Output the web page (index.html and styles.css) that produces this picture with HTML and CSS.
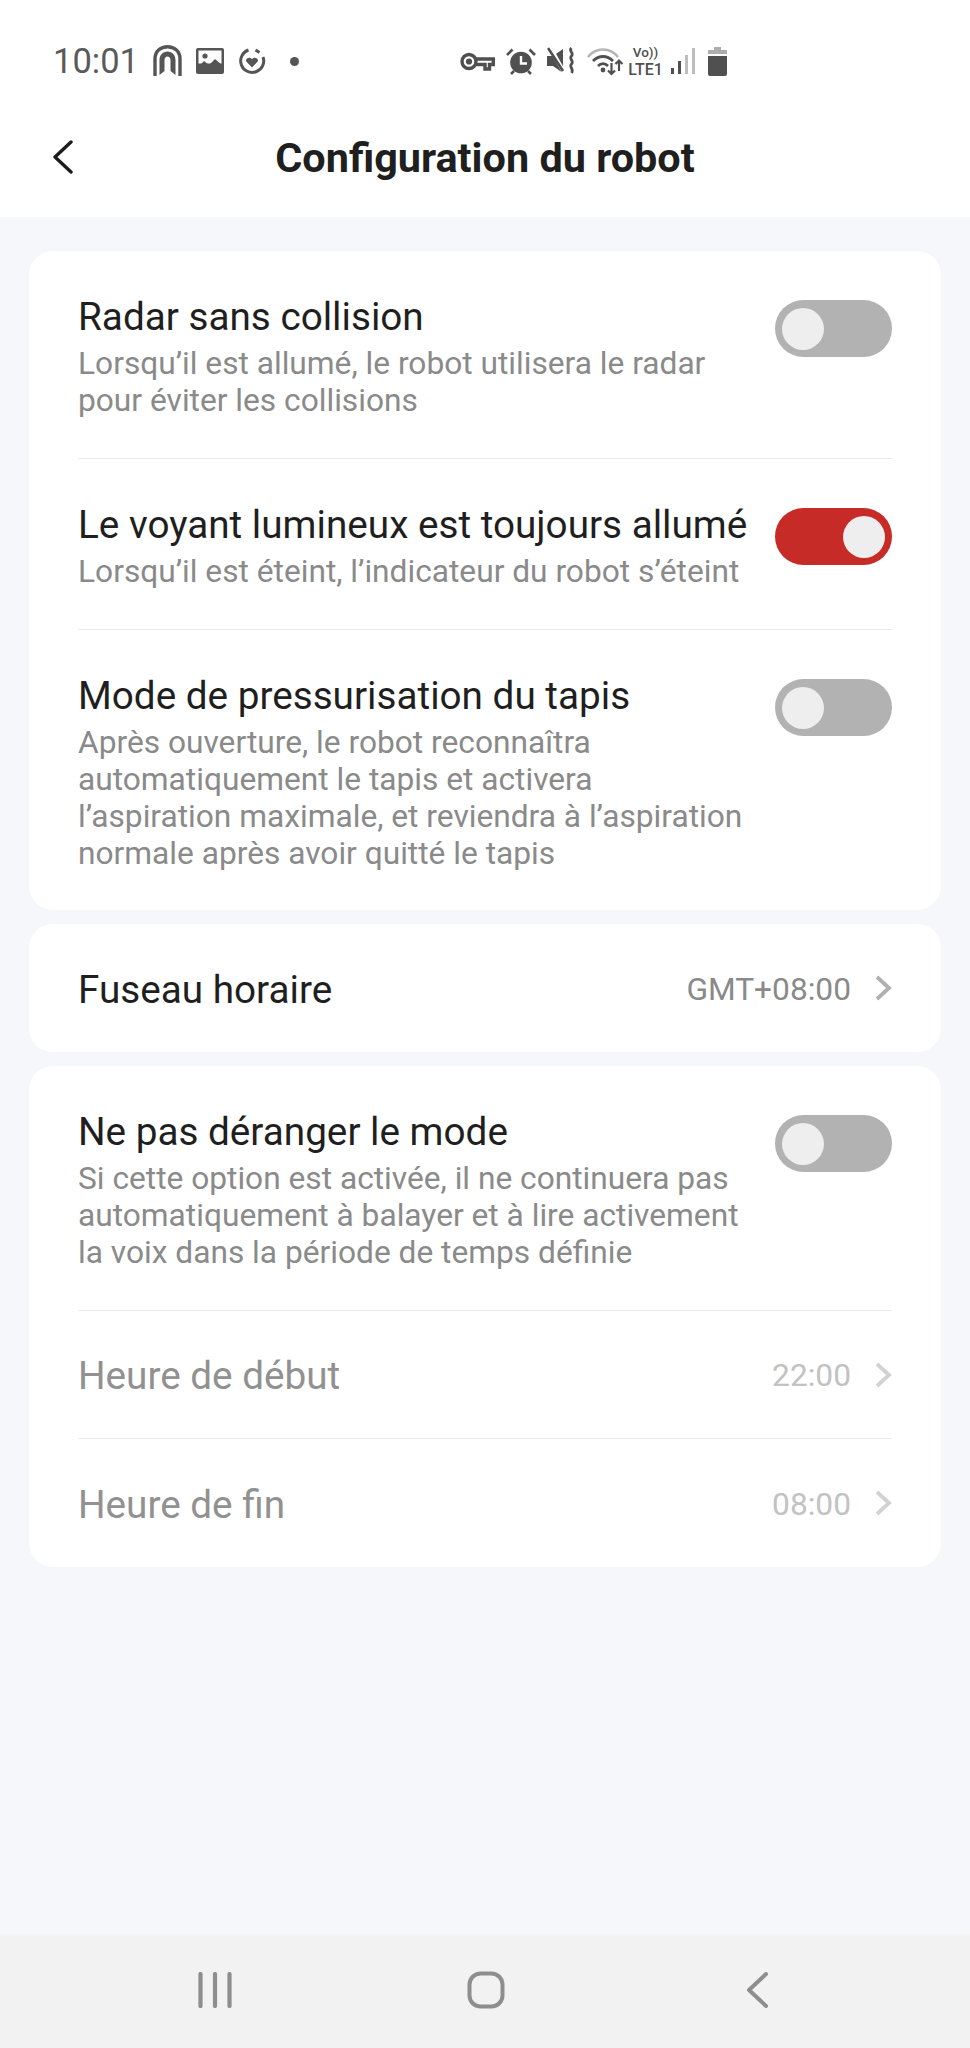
FILE: index.html
```html
<!DOCTYPE html>
<html lang="fr">
<head>
<meta charset="utf-8">
<title>Configuration du robot</title>
<link rel="stylesheet" href="styles.css">
</head>
<body>
<div class="phone">
  <header class="top">
    <div class="status">
      <div class="status-left">
        <span class="clock">10:01</span>
        <svg class="ic" width="29" height="32" viewBox="0 0 29 32" fill="none"><path d="M2 31V14C2 6 8 1.700 14.500 1.700S27 6 27 14v17" stroke="#555" stroke-width="3.400"/><path d="M6.500 30V15c0-5 3.500-8.500 8-8.500s8 3.500 8 8.500v15l-5-4V15c0-2-1.500-3.500-3-3.500S11.500 13 11.500 15v11z" fill="#555"/></svg>
        <svg class="ic" width="28" height="26" viewBox="0 0 28 26"><rect width="28" height="26" rx="2" fill="#555"/><rect x="2.500" y="2.500" width="23" height="13" fill="#fff"/><circle cx="9" cy="8" r="2.600" fill="#555"/><path d="M2 19l6-6 5 4 6-6 7 6v6H2z" fill="#555"/></svg>
        <svg class="ic" width="28" height="28" viewBox="0 0 28 28" fill="none"><path d="M10.500 3A11.500 11.500 0 1 0 25 10" stroke="#555" stroke-width="3"/><path d="M17.500 3l4 2.500" stroke="#555" stroke-width="3"/><path d="M14 20.500l-5.500-5.700c-2-3 3-5.800 5.500-2.600 2.500-3.200 7.500-.4 5.500 2.600z" fill="#555"/></svg>
        <span class="dot"></span>
      </div>
      <div class="status-right">
        <svg class="s-key" width="35" height="19" viewBox="0 0 35 19" fill="none" stroke="#505050" stroke-width="3.400"><circle cx="9" cy="9.500" r="7"/><path d="M16 7h17.300v5.500H29.500v4.500H25v-4.500h-9"/><circle cx="9" cy="9.500" r="1.400" fill="#505050"/></svg>
        <svg class="s-alarm" width="30" height="27" viewBox="0 0 30 27"><circle cx="15" cy="14.500" r="10.800" fill="#505050"/><path d="M15 8v7.500h6" fill="none" stroke="#fff" stroke-width="2.400"/><path d="M1 7l5.500-5.500M29 7l-5.500-5.500M5 26l3-3M25 26l-3-3" stroke="#505050" stroke-width="2.600"/></svg>
        <svg class="s-mute" width="28" height="28" viewBox="0 0 28 28" fill="none"><path d="M0 9h6l10-7v24l-10-7H0z" fill="#505050"/><path d="M3 0l15 27" stroke="#fff" stroke-width="4"/><path d="M1 1l15 23" stroke="#505050" stroke-width="2.600"/><path d="M24.500 1c-3.500 3 3 5 0 8s3 5 0 8 3 5 0 9" stroke="#505050" stroke-width="2.800"/></svg>
        <svg class="s-wifi" width="36" height="30" viewBox="0 0 36 30" fill="none"><path d="M1 11C9 1 23 1 31 11" stroke="#b4b4b4" stroke-width="2.600"/><path d="M6 15c6-6 14-6 20 0M11 20c3-3 7-3 10 0" stroke="#505050" stroke-width="2.800"/><circle cx="16" cy="24" r="2.400" fill="#505050"/><path d="M24.500 17v11M21 24.500l3.500 3.500 3.500-3.500" stroke="#505050" stroke-width="2.200"/><path d="M32 25V14.500M28.500 18l3.500-3.500 3.500 3.500" stroke="#505050" stroke-width="2.200"/></svg>
        <span class="volte"><span class="vo">Vo))</span><span class="lte">LTE1</span></span>
        <svg class="s-signal" width="24" height="26" viewBox="0 0 24 26"><rect x="0" y="20" width="3" height="6" fill="#505050"/><rect x="7" y="13" width="3" height="13" fill="#505050"/><rect x="14" y="7" width="3" height="19" fill="#bdbdbd"/><rect x="21" y="0" width="3" height="26" fill="#bdbdbd"/></svg>
        <svg class="s-batt" width="19" height="29" viewBox="0 0 19 29"><path d="M6 0h7v3h5a1 1 0 0 1 1 1v3H0V4a1 1 0 0 1 1-1h5z" fill="#adadad"/><path d="M0 9h19v18a2 2 0 0 1-2 2H2a2 2 0 0 1-2-2z" fill="#505050"/></svg>
      </div>
    </div>
    <div class="titlebar">
      <svg class="back" width="20" height="34" viewBox="0 0 20 34" fill="none"><path d="M18 2L2 17l16 15" stroke="#1c1c1c" stroke-width="3.400" stroke-linecap="round" stroke-linejoin="round"/></svg>
      <h1 class="title">Configuration du robot</h1>
    </div>
  </header>

  <main class="content">
    <section class="card">
      <div class="row row-a">
        <div class="text">
          <div class="name">Radar sans collision</div>
          <div class="desc">Lorsqu’il est allumé, le robot utilisera le radar<br>pour éviter les collisions</div>
        </div>
        <span class="switch"><span class="knob"></span></span>
      </div>
      <div class="row row-b">
        <div class="text">
          <div class="name">Le voyant lumineux est toujours allumé</div>
          <div class="desc">Lorsqu’il est éteint, l’indicateur du robot s’éteint</div>
        </div>
        <span class="switch on"><span class="knob"></span></span>
      </div>
      <div class="row row-c">
        <div class="text">
          <div class="name">Mode de pressurisation du tapis</div>
          <div class="desc">Après ouverture, le robot reconnaîtra<br>automatiquement le tapis et activera<br>l’aspiration maximale, et reviendra à l’aspiration<br>normale après avoir quitté le tapis</div>
        </div>
        <span class="switch"><span class="knob"></span></span>
      </div>
    </section>

    <section class="card">
      <div class="link">
        <span class="name">Fuseau horaire</span>
        <span class="value">GMT+08:00</span>
        <svg class="chev" width="18" height="28" viewBox="0 0 18 28" fill="none"><path d="M3 3l12 11L3 25" stroke="#b0b0b0" stroke-width="3.800"/></svg>
      </div>
    </section>

    <section class="card">
      <div class="row row-d">
        <div class="text">
          <div class="name">Ne pas déranger le mode</div>
          <div class="desc">Si cette option est activée, il ne continuera pas<br>automatiquement à balayer et à lire activement<br>la voix dans la période de temps définie</div>
        </div>
        <span class="switch"><span class="knob"></span></span>
      </div>
      <div class="link muted ruled">
        <span class="name">Heure de début</span>
        <span class="value">22:00</span>
        <svg class="chev" width="18" height="28" viewBox="0 0 18 28" fill="none"><path d="M3 3l12 11L3 25" stroke="#d2d2d2" stroke-width="3.800"/></svg>
      </div>
      <div class="link muted ruled last">
        <span class="name">Heure de fin</span>
        <span class="value">08:00</span>
        <svg class="chev" width="18" height="28" viewBox="0 0 18 28" fill="none"><path d="M3 3l12 11L3 25" stroke="#d2d2d2" stroke-width="3.800"/></svg>
      </div>
    </section>
  </main>

  <nav class="navbar">
    <svg width="34" height="36" viewBox="0 0 34 36" fill="none" stroke="#8e8e8e" stroke-width="4.200" stroke-linecap="round"><path d="M2.500 2v32M17 2v32M31.500 2v32"/></svg>
    <svg width="38" height="38" viewBox="0 0 38 38" fill="none"><rect x="2.500" y="2.500" width="33" height="33" rx="11" stroke="#8e8e8e" stroke-width="4"/></svg>
    <svg width="22" height="36" viewBox="0 0 22 36" fill="none"><path d="M20 2L3 18l17 16" stroke="#8e8e8e" stroke-width="4" stroke-linecap="round" stroke-linejoin="round"/></svg>
  </nav>
</div>
</body>
</html>
```

FILE: styles.css
```css
* { box-sizing: border-box; }
html, body { margin: 0; padding: 0; }
body { font-family: Roboto, "Liberation Sans", sans-serif; background: #f5f7fb; color: #1f1f1f; }
.phone { width: 970px; height: 2048px; display: flex; flex-direction: column; overflow: hidden; }

.top { background: #fff; height: 217px; flex: none; }
.status { height: 122px; display: flex; align-items: center; padding: 0 0 0 53px; }
.status-left { display: flex; align-items: center; width: 407px; }
.clock { font-size: 34.500px; color: #5a5a5a; margin-right: 14px; }
.ic { margin-right: 14px; }
.dot { width: 9px; height: 9px; border-radius: 50%; background: #555; margin-left: 10px; }
.status-right { display: flex; align-items: center; }
.s-alarm { margin-left: 11px; }
.s-mute { margin-left: 11px; }
.s-wifi { margin-left: 12px; }
.volte { margin-left: 5px; width: 35px; display: flex; flex-direction: column; align-items: center; color: #505050; font-weight: 500; }
.vo { font-size: 13.500px; line-height: 16px; }
.lte { font-size: 16px; line-height: 19px; }
.s-signal { margin-left: 8px; }
.s-batt { margin-left: 13px; }

.titlebar { height: 72px; display: flex; align-items: center; justify-content: center; position: relative; }
.back { position: absolute; left: 53px; top: 18px; }
.title { margin: 0; font-size: 41.400px; font-weight: 700; color: #1f1f1f; }

.content { flex: 1; padding: 34px 29px 0; display: flex; flex-direction: column; gap: 14px; }
.card { background: #fff; border-radius: 24px; padding: 0 49px; }

.row { display: flex; justify-content: space-between; align-items: flex-start; }
.row + .row { border-top: 1px solid #ebebeb; }
.row-a { height: 207px; padding-top: 45px; }
.row-b { height: 171px; padding-top: 45px; }
.row-c { height: 281px; padding-top: 45px; }
.row-d { height: 244px; padding-top: 45px; }
.name { font-size: 38.700px; line-height: 42px; color: #1f1f1f; white-space: nowrap; }
.desc { font-size: 31.700px; line-height: 37px; color: #8a8a8a; margin-top: 7px; white-space: nowrap; }
.text { flex: 1; }

.switch { flex: none; width: 117px; height: 57px; margin-top: 4px; border-radius: 29px; background: #b2b2b2; display: flex; align-items: center; padding: 0 7px; }
.switch.on { background: #c62b27; justify-content: flex-end; }
.knob { width: 42px; height: 42px; border-radius: 50%; background: #eeeeee; }

.link { display: flex; align-items: center; height: 128px; }
.link .name { flex: 1; padding-top: 3px; }
.value { font-size: 31.700px; color: #8a8a8a; padding-top: 2px; }
.chev { margin-left: 23px; }
.ruled { border-top: 1px solid #ebebeb; }
.last { height: 129px; }
.muted .name { color: #919191; }
.muted .value { color: #c2c2c2; }

.navbar { flex: none; height: 114px; background: #f2f2f2; display: grid; grid-template-columns: repeat(3, 271px); justify-content: center; justify-items: center; align-items: center; padding: 0 0 3px 2px; }
```
